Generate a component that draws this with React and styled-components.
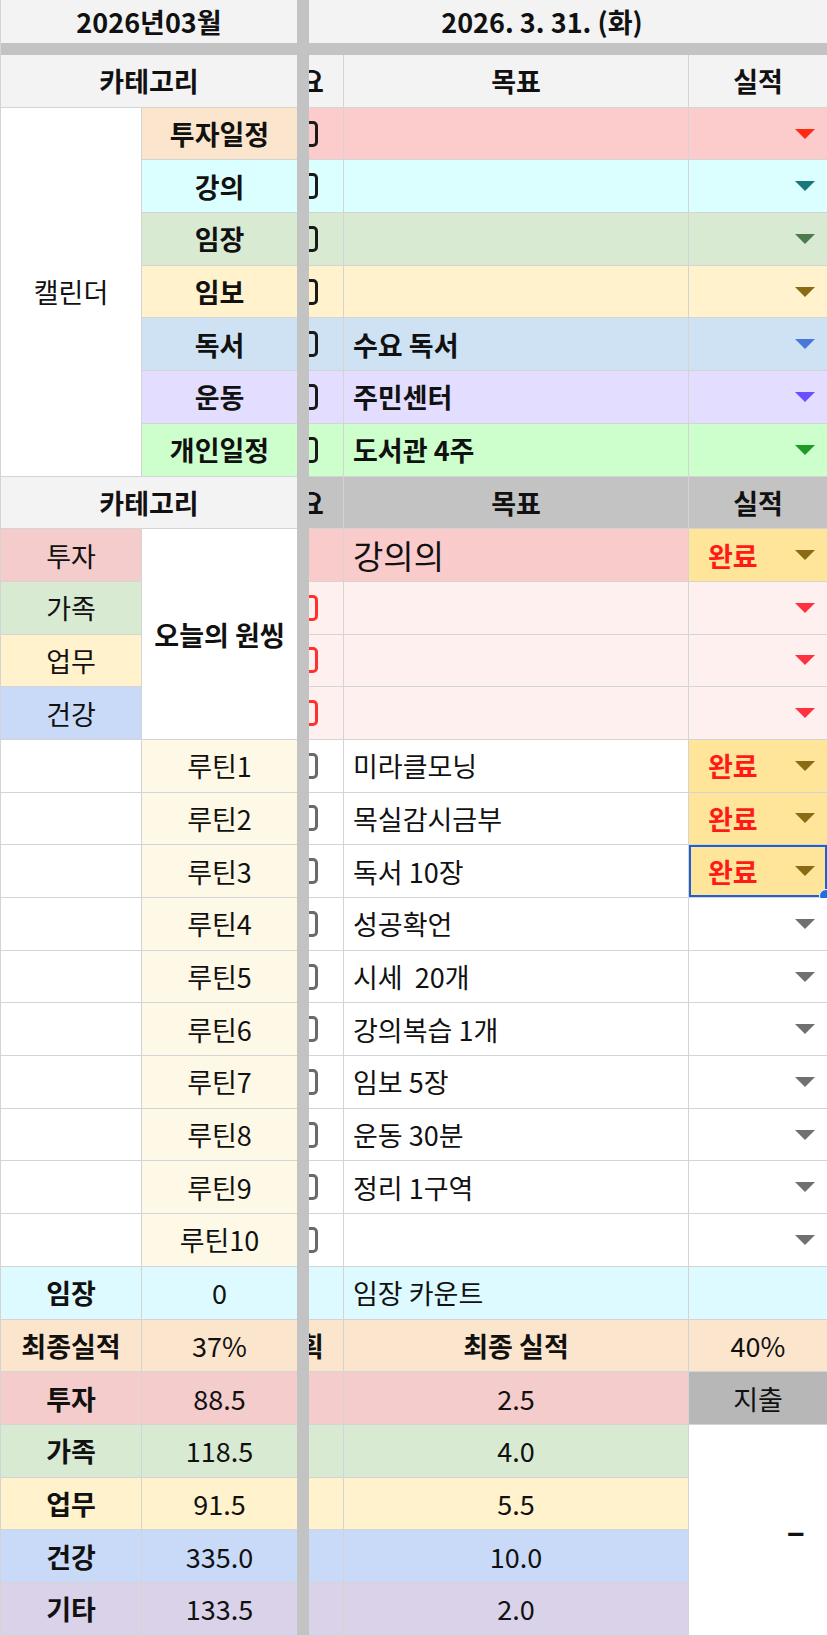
import React from "react";
import styled, { createGlobalStyle } from "styled-components";

const GlobalStyle = createGlobalStyle`
  html, body {
    margin: 0;
    padding: 0;
    background: #fff;
  }
  body {
    font-family: "Noto Sans CJK KR", "Noto Sans", sans-serif;
    color: #111;
  }
`;

const calendar = [
  { label: "투자일정", labelBg: "#fce5cd", bg: "#fccbcb", goal: "", arrow: "#ff2a12" },
  { label: "강의", labelBg: "#dbffff", bg: "#dbffff", goal: "", arrow: "#17777a" },
  { label: "임장", labelBg: "#d9ead3", bg: "#d9ead3", goal: "", arrow: "#4e7a4e" },
  { label: "임보", labelBg: "#fff2cc", bg: "#fff2cc", goal: "", arrow: "#8a6a12" },
  { label: "독서", labelBg: "#cfe2f3", bg: "#cfe2f3", goal: "수요 독서", arrow: "#4a78d8" },
  { label: "운동", labelBg: "#e3ddff", bg: "#e3ddff", goal: "주민센터", arrow: "#6c4dff" },
  { label: "개인일정", labelBg: "#ccffcc", bg: "#ccffcc", goal: "도서관 4주", arrow: "#1e9a28" },
];

const oneThing = [
  { label: "투자", labelBg: "#f4cccc" },
  { label: "가족", labelBg: "#d9ead3" },
  { label: "업무", labelBg: "#fff2cc" },
  { label: "건강", labelBg: "#c9daf8" },
];

const routines = [
  { name: "루틴1", goal: "미라클모닝", done: true },
  { name: "루틴2", goal: "목실감시금부", done: true },
  { name: "루틴3", goal: "독서 10장", done: true, selected: true },
  { name: "루틴4", goal: "성공확언" },
  { name: "루틴5", goal: "시세  20개" },
  { name: "루틴6", goal: "강의복습 1개" },
  { name: "루틴7", goal: "임보 5장" },
  { name: "루틴8", goal: "운동 30분" },
  { name: "루틴9", goal: "정리 1구역" },
  { name: "루틴10", goal: "" },
];

const summary = [
  { label: "투자", bg: "#f4cccc", total: "88.5", today: "2.5" },
  { label: "가족", bg: "#d9ead3", total: "118.5", today: "4.0" },
  { label: "업무", bg: "#fff2cc", total: "91.5", today: "5.5" },
  { label: "건강", bg: "#c9daf8", total: "335.0", today: "10.0" },
  { label: "기타", bg: "#d9d2e9", total: "133.5", today: "2.0" },
];

const App = () => {
  return (
    <>
      <GlobalStyle />
      <Sheet>
        <Cell $col="1 / 3" $bg="#f3f3f3" $bold>2026년03월</Cell>
        <Cell $col="4 / 7" $bg="#f3f3f3" $bold $pad="0 52px 0 0">
          2026. 3. 31. (화)
        </Cell>
        <VBar />
        <HBar />

        <Cell $col="1 / 3" $bg="#f3f3f3" $bold>카테고리</Cell>
        <ClipCell $col="4" $bg="#f3f3f3" $bold><Cut>요</Cut></ClipCell>
        <Cell $col="5" $bg="#f3f3f3" $bold>목표</Cell>
        <Cell $col="6" $bg="#f3f3f3" $bold>실적</Cell>

        {calendar.map((r, i) => (
          <React.Fragment key={r.label}>
            {i === 0 && <Cell $col="1" $row="span 7">캘린더</Cell>}
            <Cell $col="2" $bg={r.labelBg} $bold>{r.label}</Cell>
            <ClipCell $col="4" $bg={r.bg}><Check $color="#1a1a1a" /></ClipCell>
            <Cell $col="5" $bg={r.bg} $align="left" $bold>{r.goal}</Cell>
            <Result $bg={r.bg}><Arrow $color={r.arrow} /></Result>
          </React.Fragment>
        ))}

        <Cell $col="1 / 3" $bg="#f3f3f3" $bold>카테고리</Cell>
        <ClipCell $col="4" $bg="#c3c3c3" $bold><Cut>요</Cut></ClipCell>
        <Cell $col="5" $bg="#c3c3c3" $bold>목표</Cell>
        <Cell $col="6" $bg="#c3c3c3" $bold>실적</Cell>

        {oneThing.map((r, i) => (
          <React.Fragment key={r.label}>
            <Cell $col="1" $bg={r.labelBg}>{r.label}</Cell>
            {i === 0 && <Cell $col="2" $row="span 4" $bold>오늘의 원씽</Cell>}
            {i === 0 ? (
              <>
                <Cell $col="4" $bg="#f9cbcb" />
                <Cell $col="5" $bg="#f9cbcb" $align="left" $size={33}>강의의</Cell>
                <Result $bg="#ffe599">
                  <Done>완료</Done>
                  <Arrow $color="#8a6a12" />
                </Result>
              </>
            ) : (
              <>
                <ClipCell $col="4" $bg="#fff0f0"><Check $color="#ff3030" /></ClipCell>
                <Cell $col="5" $bg="#fff0f0" />
                <Result $bg="#fff0f0"><Arrow $color="#ff3040" /></Result>
              </>
            )}
          </React.Fragment>
        ))}

        {routines.map((r) => (
          <React.Fragment key={r.name}>
            <Cell $col="1" />
            <Cell $col="2" $bg="#fef8e6">{r.name}</Cell>
            <ClipCell $col="4"><Check $color="#6a6a6a" /></ClipCell>
            <Cell $col="5" $align="left">{r.goal}</Cell>
            <Result $bg={r.done ? "#ffe599" : "#fff"} $selected={r.selected}>
              {r.done && <Done>완료</Done>}
              <Arrow $color={r.done ? "#8a6a12" : "#707070"} />
              {r.selected && <Handle />}
            </Result>
          </React.Fragment>
        ))}

        <Cell $col="1" $bg="#dcfaff" $bold>임장</Cell>
        <Cell $col="2" $bg="#dcfaff">0</Cell>
        <Cell $col="4" $bg="#dcfaff" />
        <Cell $col="5" $bg="#dcfaff" $align="left">임장 카운트</Cell>
        <Cell $col="6" $bg="#dcfaff" />

        <Cell $col="1" $bg="#fce5cd" $bold>최종실적</Cell>
        <Cell $col="2" $bg="#fce5cd">37%</Cell>
        <ClipCell $col="4" $bg="#fce5cd" $bold><Cut>획</Cut></ClipCell>
        <Cell $col="5" $bg="#fce5cd" $bold>최종 실적</Cell>
        <Cell $col="6" $bg="#fce5cd">40%</Cell>

        {summary.map((r, i) => (
          <React.Fragment key={r.label}>
            <Cell $col="1" $bg={r.bg} $bold>{r.label}</Cell>
            <Cell $col="2" $bg={r.bg}>{r.total}</Cell>
            <Cell $col="4" $bg={r.bg} />
            <Cell $col="5" $bg={r.bg}>{r.today}</Cell>
            {i === 0 && <Cell $col="6" $bg="#b7b7b7">지출</Cell>}
            {i === 1 && (
              <Cell $col="6" $row="span 4" $align="right" $bold $size={34} $pad="0 22px 0 0">
                –
              </Cell>
            )}
          </React.Fragment>
        ))}
      </Sheet>
    </>
  );
};

const Sheet = styled.div`
  position: relative;
  box-sizing: border-box;
  width: 827px;
  height: 1636px;
  overflow: hidden;
  display: grid;
  grid-template-columns: 140px 155px 10px 34px 344px 1fr;
  grid-template-rows: 43px 10px repeat(30, 51.7px);
  gap: 1px;
  padding-left: 1px;
  background: #d4d4d4;
`;

const Cell = styled.div`
  grid-column: ${(p) => p.$col};
  grid-row: ${(p) => p.$row || "auto"};
  background: ${(p) => p.$bg || "#fff"};
  display: flex;
  align-items: center;
  justify-content: ${(p) =>
    p.$align === "left" ? "flex-start" : p.$align === "right" ? "flex-end" : "center"};
  padding: ${(p) => p.$pad || (p.$align === "left" ? "0 0 0 9px" : "0")};
  font-size: ${(p) => p.$size || 27}px;
  font-weight: ${(p) => (p.$bold ? 700 : 400)};
  line-height: 1;
  color: #111;
  white-space: pre;
  overflow: hidden;
  min-width: 0;
`;

const ClipCell = styled(Cell)`
  justify-content: flex-start;
`;

const Cut = styled.span`
  margin-left: -10px;
`;

const Check = styled.span`
  flex: none;
  box-sizing: border-box;
  width: 22px;
  height: 26px;
  margin-left: -13px;
  border: 3px solid ${(p) => p.$color};
  border-radius: 5px;
`;

const VBar = styled.div`
  grid-column: 3;
  grid-row: 1 / -1;
  background: #c3c3c3;
  margin: 0 -1px;
`;

const HBar = styled.div`
  grid-column: 1 / -1;
  grid-row: 2;
  background: #c3c3c3;
  margin: -1px 0;
`;

const Result = styled.div`
  grid-column: 6;
  position: relative;
  background: ${(p) => p.$bg};
  display: flex;
  align-items: center;
  padding: 0 12px 0 19px;
  box-shadow: ${(p) => (p.$selected ? "inset 0 0 0 2px #1f5fd0" : "none")};
`;

const Done = styled.span`
  color: #ff1a1a;
  font-size: 27px;
  font-weight: 700;
  line-height: 1;
`;

const Arrow = styled.span`
  margin-left: auto;
  width: 0;
  height: 0;
  border-left: 10px solid transparent;
  border-right: 10px solid transparent;
  border-top: 10px solid ${(p) => p.$color};
`;

const Handle = styled.span`
  position: absolute;
  right: -6px;
  bottom: -6px;
  width: 12px;
  height: 12px;
  border-radius: 50%;
  background: #1f6fe0;
  border: 1px solid #fff;
`;

export default App;
